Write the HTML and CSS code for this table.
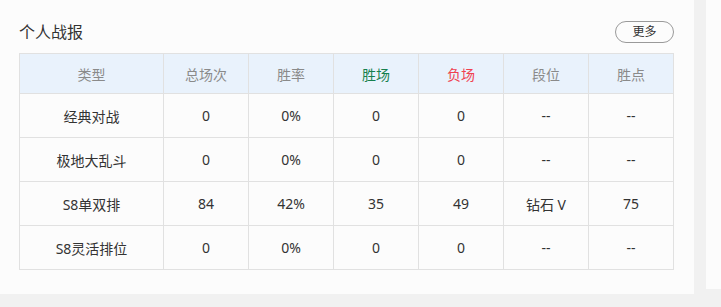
FILE: index.html
```html
<!DOCTYPE html>
<html lang="zh-CN">
<head>
<meta charset="utf-8">
<link rel="stylesheet" href="styles.css">
</head>
<body>
<div class="page">
  <section class="card">
    <div class="card-head">
      <h2 class="title">个人战报</h2>
      <button class="more">更多</button>
    </div>
    <table class="stats">
      <colgroup>
        <col class="c-type"><col class="c-n"><col class="c-n"><col class="c-n"><col class="c-n"><col class="c-n"><col class="c-n">
      </colgroup>
      <thead>
        <tr>
          <th>类型</th><th>总场次</th><th>胜率</th><th class="win">胜场</th><th class="lose">负场</th><th>段位</th><th>胜点</th>
        </tr>
      </thead>
      <tbody>
        <tr><td>经典对战</td><td>0</td><td>0%</td><td>0</td><td>0</td><td>--</td><td>--</td></tr>
        <tr><td>极地大乱斗</td><td>0</td><td>0%</td><td>0</td><td>0</td><td>--</td><td>--</td></tr>
        <tr><td>S8单双排</td><td>84</td><td>42%</td><td>35</td><td>49</td><td>钻石&nbsp;V</td><td>75</td></tr>
        <tr><td>S8灵活排位</td><td>0</td><td>0%</td><td>0</td><td>0</td><td>--</td><td>--</td></tr>
      </tbody>
    </table>
  </section>
  <aside class="side"></aside>
</div>
</body>
</html>
```

FILE: styles.css
```css
html, body {
  margin: 0;
  padding: 0;
  background: #f1f1f1;
}
body {
  font-family: "Noto Sans", "Noto Sans CJK SC", sans-serif;
  color: #333;
  overflow: hidden;
}
.page {
  display: flex;
  align-items: flex-start;
  gap: 12px;
  width: 721px;
}
.card {
  flex: 0 0 auto;
  width: 694px;
  height: 294px;
  box-sizing: border-box;
  background: #fcfcfc;
  padding: 21px 20px 0 19px;
}
.side {
  flex: 0 0 auto;
  width: 40px;
  height: 289px;
  background: #fcfcfc;
}
.card-head {
  display: flex;
  align-items: center;
  justify-content: space-between;
  height: 22px;
  margin-bottom: 10px;
}
.title {
  margin: 0;
  font-size: 16px;
  font-weight: normal;
  color: #333;
  line-height: 22px;
}
.more {
  width: 59px;
  height: 22px;
  box-sizing: border-box;
  border: 1px solid #9a9a9a;
  border-radius: 11px;
  background: #fcfcfc;
  font-family: inherit;
  font-size: 12px;
  color: #333;
  padding: 0;
  line-height: 20px;
}
.stats {
  width: 655px;
  table-layout: fixed;
  border-collapse: collapse;
  font-size: 14px;
  text-align: center;
}
.c-type { width: 144px; }
.c-n { width: 85px; }
.stats th, .stats td {
  border: 1px solid #e1e1e1;
  padding: 0;
}
.stats th {
  height: 39px;
  background: #e9f2fc;
  font-weight: normal;
  color: #8a8a8a;
}
.stats td {
  height: 43px;
  color: #333;
}
.stats th.win { color: #17804e; }
.stats th.lose { color: #f0414f; }
```
